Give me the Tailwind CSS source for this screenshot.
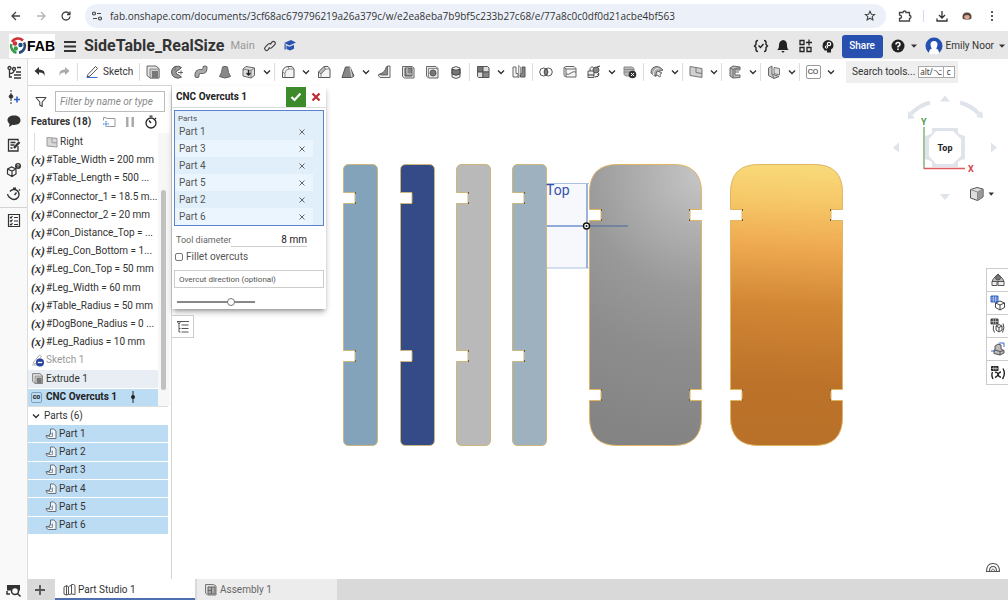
<!DOCTYPE html>
<html lang="en">

<head>
  <meta charset="UTF-8" />
  <meta name="viewport" content="width=device-width, initial-scale=1.0" />
  <title>SideTable_RealSize | Part Studio 1</title>
  <script src="https://cdn.jsdelivr.net/npm/@tailwindcss/browser@4"></script>
</head>

<body class="h-screen flex flex-col overflow-hidden bg-white font-[Roboto,sans-serif] text-[10px] leading-4 text-[#333]">

  <!-- shared icons -->
  <svg class="hidden">
    <symbol id="chev" viewBox="0 0 12 12"><path d="M3 4.5l3 3 3-3" fill="none" stroke="#333" stroke-width="1.4" /></symbol>
    <symbol id="caret" viewBox="0 0 8 8"><path d="M1 2.5h6L4 5.8z" fill="#333" /></symbol>
    <symbol id="close" viewBox="0 0 8 8"><path d="M1.5 1.5l5 5m0-5l-5 5" stroke="#666" stroke-width="1" fill="none" /></symbol>
    <symbol id="part" viewBox="0 0 12 12">
      <path d="M5.500 1h3.200L11 3v7.500H3.500Q1 10 1 7.500h3.500V6h1z" fill="#eef4f9" stroke="#67727c" stroke-width="1" stroke-linejoin="round" />
      <path d="M1 7.500l2.500 1h4V4.500M5.500 6h2" fill="none" stroke="#67727c" stroke-width=".7" />
    </symbol>
    <symbol id="extrude" viewBox="0 0 16 16">
      <path d="M2 2h9l3 2.500V14H5L2 11.500z" fill="#e4e4e4" stroke="#666" />
      <path d="M5 5h9v9H5z" fill="#ccc" stroke="#777" stroke-width=".8" />
      <path d="M7 7h6v7H7z" fill="#777" />
    </symbol>
  </svg>

  <!-- browser bar -->
  <div class="flex h-[31px] shrink-0 items-center pr-2 pl-2">
    <button class="flex w-[25px] items-center" aria-label="Back">
      <svg class="h-4 w-4" viewBox="0 0 16 16" fill="none" stroke="#444" stroke-width="1.300"><path d="M12 8H4m4-4L4 8l4 4" /></svg>
    </button>
    <button class="flex w-[25px] items-center" aria-label="Forward">
      <svg class="h-4 w-4" viewBox="0 0 16 16" fill="none" stroke="#b5b5b5" stroke-width="1.300"><path d="M4 8h8M8 4l4 4-4 4" /></svg>
    </button>
    <button class="flex w-[27px] items-center" aria-label="Reload">
      <svg class="h-4 w-4" viewBox="0 0 16 16" fill="none" stroke="#444" stroke-width="1.300"><path d="M11.500 6A4 4 0 1 0 12 8.500M12 3.500V6.500H9" /></svg>
    </button>
    <div class="flex h-6 flex-1 items-center rounded-full bg-[#ecf1f9] pr-2">
      <svg class="ml-1 h-4 w-4 shrink-0" viewBox="0 0 16 16" fill="none" stroke="#444" stroke-width="1.200"><circle cx="5" cy="5.500" r="1.500" /><path d="M8 5.500h4M4 10.500h4" /><circle cx="11" cy="10.500" r="1.500" /></svg>
      <input type="text" aria-label="Address" class="ml-[5px] min-w-0 flex-1 font-['Open_Sans',sans-serif] text-[10px] text-[#333] outline-none" value="fab.onshape.com/documents/3cf68ac679796219a26a379c/w/e2ea8eba7b9bf5c233b27c68/e/77a8c0c0df0d21acbe4bf563" />
      <button aria-label="Bookmark"><svg class="h-4 w-4" viewBox="0 0 16 16" fill="none" stroke="#444" stroke-width="1.100"><path d="M8 3.200l1.400 3 3.200.3-2.400 2.200.7 3.200L8 10.200l-2.900 1.700.7-3.200-2.400-2.200 3.200-.3z" /></svg></button>
    </div>
    <div class="flex w-[114px] items-center pl-[11px]">
      <svg class="h-4 w-4" viewBox="0 0 16 16" fill="none" stroke="#444" stroke-width="1.300"><path d="M2.500 4.500h3.500Q6 3 7.500 3T9 4.500h3.500V7.500Q14 7.500 14 9t-1.500 1.500V13h-10V10.500Q4.500 10.500 4.500 8.800T2.500 7z" /></svg>
      <span class="ml-2.5 h-3 w-px bg-[#cfdcf2]"></span>
      <svg class="ml-2.5 h-4 w-4" viewBox="0 0 16 16" fill="none" stroke="#333" stroke-width="1.300"><path d="M8 3v7M5 7l3 3 3-3M3 10.500V13h10v-2.500" /></svg>
      <svg class="ml-[9px] h-4 w-4" viewBox="0 0 16 16"><path d="M3.500 10Q3 4.500 8 4.500T12.500 10Q12 11.500 8 11.500T3.500 10" fill="#55443e" /><ellipse cx="8" cy="9" rx="2.800" ry="2" fill="#dda793" /></svg>
      <svg class="ml-[9px] h-4 w-4" viewBox="0 0 16 16" fill="#333"><circle cx="8" cy="4" r="1.100" /><circle cx="8" cy="8" r="1.100" /><circle cx="8" cy="12" r="1.100" /></svg>
    </div>
  </div>

  <!-- document header -->
  <header class="flex h-7 shrink-0 items-center bg-[#e7e7e7] pt-0.5 pr-0.5 pl-[9px]">
    <div class="flex h-6 w-[46px] items-center bg-white">
      <svg class="h-[18px] w-[18px] shrink-0" viewBox="0 0 18 18" fill="none" stroke-width="2.600">
        <path d="M3 5A7 7 0 0 1 14 3.500" stroke="#cf3038" />
        <path d="M15 5.500A7 7 0 0 1 10 15.700" stroke="#274d78" />
        <path d="M7.500 15.700A7 7 0 0 1 2.300 7" stroke="#3b9a4d" />
        <circle cx="6" cy="6.500" r="2.200" fill="#cf3038" stroke="none" /><circle cx="11.500" cy="8" r="2.200" fill="#274d78" stroke="none" /><circle cx="6.800" cy="11.500" r="2.200" fill="#3b9a4d" stroke="none" />
      </svg>
      <span class="font-['Liberation_Sans',sans-serif] text-sm font-bold text-black">FAB</span>
    </div>
    <button class="ml-2 flex" aria-label="Menu"><svg class="h-[14px] w-[14px]" viewBox="0 0 14 14" stroke="#333" stroke-width="2"><path d="M1 3h12M1 7.500h12M1 12h12" /></svg></button>
    <h1 class="ml-[7px] text-base font-bold text-[#333]">SideTable_RealSize</h1>
    <span class="ml-1.5 text-[11px] text-[#999]">Main</span>
    <a href="#" class="ml-[7px]" aria-label="Link"><svg class="h-4 w-4" viewBox="0 0 16 16" fill="none" stroke="#444" stroke-width="1.200"><path d="M7.500 10L6 11.800a1.900 1.900 0 0 1-2.800-2.700l3-3a1.900 1.900 0 0 1 2.900.3" /><path d="M8.500 5.800L10 4a1.900 1.900 0 0 1 2.800 2.700l-3 3a1.900 1.900 0 0 1-2.900-.3" /></svg></a>
    <a href="#" class="ml-1" aria-label="Education"><svg class="h-4 w-4" viewBox="0 0 16 16" fill="#2a52b0"><path d="M2 5L9 2l5 2.500L7.500 7.500zM4.500 7.500l3 1.200 4.500-2v4L8 12.500l-3.500-1.500zM2.500 6v5.500h1.300V6.500z" /></svg></a>
    <div class="ml-auto flex items-center">
      <svg class="h-4 w-[22px]" viewBox="0 0 22 16" fill="none" stroke="#222" stroke-width="1.400"><path d="M8 2.500Q6 2.500 6 4.500V6.500L4.500 8 6 9.500v2q0 2 2 2M14 2.500q2 0 2 2V6.500L17.500 8 16 9.500v2q0 2-2 2M8.500 7.500l2 2 3-3.500" /></svg>
      <svg class="h-4 w-[22px]" viewBox="0 0 22 16" fill="#222"><path d="M11 2Q15 2.500 15 7T17 12H5Q7 11 7 7T11 2M9.500 13h3q-.3 1.500-1.500 1.500T9.500 13" /></svg>
      <svg class="h-4 w-[23px]" viewBox="0 0 22 16" fill="none" stroke="#222" stroke-width="1.300"><path d="M5.500 2.500h4v4h-4zM5.500 9.500h4v4h-4zM12.500 9.500h4v4h-4zM14.500 1.500v6M11.500 4.500h6" /></svg>
      <svg class="h-4 w-[22px]" viewBox="0 0 22 16"><path d="M11 2a5.500 5.500 0 0 1 5.500 5.500q0 3-2.500 4v3h-4v-2H7.500l-2-3.500q-.5-6 5.500-7" fill="#222" /><circle cx="12" cy="6" r="1.700" fill="none" stroke="#fff" stroke-width="1.200" /><circle cx="9.500" cy="9" r="1.200" fill="none" stroke="#fff" /></svg>
      <button class="ml-[3px] h-[23px] w-[41px] rounded-[3px] bg-[#2850ae] text-[10px] font-medium text-white">Share</button>
      <button class="ml-[7px] flex items-center" aria-label="Help"><svg class="h-4 w-4" viewBox="0 0 16 16"><circle cx="8" cy="8" r="6.500" fill="#222" /><path d="M6 6.500Q6 4.500 8 4.500t2 2Q10 7.500 8 8.500V9.500M8 10.500v1.500" fill="none" stroke="#fff" stroke-width="1.500" /></svg><svg class="ml-1 h-2 w-2"><use href="#caret" /></svg></button>
      <button class="ml-[7px] flex items-center">
        <svg class="h-[18px] w-[18px]" viewBox="0 0 18 18"><circle cx="9" cy="9" r="8.500" fill="#2450b4" /><path d="M4 16.500q0-4.500 3-5Q5.500 9.500 5.500 7.500 5.500 4 9 4t3.500 3.500q0 2-1.500 4 3 .5 3 5Q9 19 4 16.500" fill="#fff" /></svg>
        <span class="ml-[3px]">Emily Noor</span><svg class="ml-1 h-2 w-2"><use href="#caret" /></svg>
      </button>
    </div>
  </header>

  <div class="flex min-h-0 flex-1">
    <!-- left rail -->
    <nav class="flex w-7 shrink-0 flex-col items-center border-r border-[#ddd] bg-[#f9f9f9] pt-[5px] pb-0.5">
      <svg class="h-4 w-4" viewBox="0 0 16 16" fill="none" stroke="#333" stroke-width="1.300"><circle cx="3.500" cy="4" r="1.500" /><circle cx="8" cy="5" r="1.500" /><path d="M3.500 5.500V13H6M3.500 9.500Q8 9.500 8 6.500M11 3.500h4M10 8h5M8 11h7M8 14h7" /></svg>
      <svg class="mt-[9px] h-4 w-4" viewBox="0 0 16 16" fill="none" stroke="#333"><path d="M5 1v14" stroke-dasharray="2 1" /><circle cx="5" cy="7.500" r="1.800" fill="#333" /><path d="M8 10.500h6M11 7.500v6" stroke="#2f5fc0" stroke-width="1.600" /></svg>
      <svg class="mt-2 h-4 w-4" viewBox="0 0 16 16" fill="#333"><path d="M8 2.500c4 0 6.500 2 6.500 4.800S12 12 8 12q-1 0-1.500-.2L3 14l.6-3Q1.500 9.800 1.500 7.300C1.500 4.500 4 2.500 8 2.500" /></svg>
      <svg class="mt-2 h-4 w-4" viewBox="0 0 16 16" fill="none" stroke="#333" stroke-width="1.300"><path d="M12 9v5H2.500V2.500H12V4M4.500 5.500h5M4.500 8h4M4.500 11h2" /><path d="M8 11l5.500-6" stroke-width="2.400" /></svg>
      <svg class="mt-[9px] h-4 w-4" viewBox="0 0 16 16" fill="none" stroke="#333" stroke-width="1.200"><path d="M1.500 7l4-2 4.500 2v5L6 14.500 1.500 12zM1.500 7L6 9l4-2M6 9v5.500" /><circle cx="12" cy="4" r="3" fill="#333" stroke="none" /><path d="M11 3.500q0-1 1-1t1 1L12 4.500v1" stroke="#fff" stroke-width=".8" /></svg>
      <svg class="mt-2 h-4 w-4" viewBox="0 0 16 16" fill="none" stroke="#333" stroke-width="1.400"><path d="M4 5.500A5 5 0 1 1 4.500 12M1.500 8Q2 11 4.500 12M8.500 9l2-2.500M7 2.200h3M8.500 2v2M13 3.500l1 1" /></svg>
      <span class="mt-[5px] h-px w-full shrink-0 bg-[#d4d4d4]"></span>
      <svg class="mt-1 h-4 w-4" viewBox="0 0 16 16" fill="none" stroke="#333" stroke-width="1.200"><path d="M2.500 2.500h11v12h-11zM4 5l1 1 1.500-2M4 8.500l1 1L6.500 7.500M4 12l1 1 1.500-2M8 5.500h4M8 9h4M8 12.500h4" /></svg>
      <svg class="mt-auto h-4 w-4" viewBox="0 0 16 16"><path d="M1 3h13v5.500H1z" fill="#333" /><circle cx="9" cy="9" r="3.500" fill="#f9f9f9" stroke="#333" stroke-width="1.500" /><path d="M11.500 11.500l3 3M1 9v3h3" stroke="#333" stroke-width="1.500" fill="none" /></svg>
    </nav>

    <div class="flex min-w-0 flex-1 flex-col">
      <!-- toolbar -->
      <div class="flex h-[26px] shrink-0 items-center">
        <button class="flex w-6 justify-center" aria-label="Undo"><svg class="h-4 w-4" viewBox="0 0 16 16"><path d="M7 3L2.500 7 7 11V8.500q5-.5 5.500 4Q14 5.500 7 5.500z" fill="#333" /></svg></button>
        <button class="flex w-6 justify-center" aria-label="Redo"><svg class="h-4 w-4" viewBox="0 0 16 16"><path d="M9 3l4.500 4L9 11V8.500q-5-.5-5.500 4Q2 5.500 9 5.500z" fill="#aaa" /></svg></button>
        <span class="mx-px h-[18px] w-px bg-[#ddd]"></span>
        <button class="flex w-[59px] items-center pl-1.5"><svg class="mr-0.5 h-4 w-4" viewBox="0 0 16 16" fill="none"><path d="M3 10.500L10.500 2.500l2 2L5 12l-3 1z" stroke="#555" /><path d="M1.500 13.500h11" stroke="#3a6fd0" /></svg>Sketch</button>
        <span class="mx-px h-[18px] w-px bg-[#ddd]"></span>
        <button class="flex w-6 justify-center" aria-label="Extrude"><svg class="h-4 w-4"><use href="#extrude" /></svg></button>
        <button class="flex w-6 justify-center" aria-label="Revolve"><svg class="h-4 w-4" viewBox="0 0 16 16"><path d="M12.500 3.500L9 6.500a2 2 0 1 0 0 4l3.500 2.500Q9 15 6 13.500 2.500 12 2.500 8T6 2.500q4-1 6.500 1" fill="#999" stroke="#555" /><path d="M9 8.500h5M12 6.500v4M6 2.500v4" stroke="#666" /></svg></button>
        <button class="flex w-6 justify-center" aria-label="Sweep"><svg class="h-4 w-4" viewBox="0 0 16 16"><path d="M4 11.500q0-4.500 4-4t4-3.500" fill="none" stroke="#555" stroke-width="5" stroke-linecap="round" /><path d="M4 11.500q0-4.500 4-4t4-3.500" fill="none" stroke="#aaa" stroke-width="3.400" stroke-linecap="round" /></svg></button>
        <button class="flex w-6 justify-center" aria-label="Loft"><svg class="h-4 w-4" viewBox="0 0 16 16"><path d="M5.500 3Q8 1.500 10.500 3q.5 6 3 9.500Q8 15.500 2.500 12.500 5 9 5.500 3" fill="#888" stroke="#666" /></svg></button>
        <button class="flex w-6 justify-center" aria-label="Thicken"><svg class="h-4 w-4" viewBox="0 0 16 16"><path d="M2 5l3-2.500L13.500 4v7.500L10 14 2 12z" fill="#ddd" stroke="#666" /><path d="M2 5l8 1.500L13.500 4M10 6.500V14" fill="none" stroke="#666" stroke-width=".8" /><path d="M7.500 6v5M5.500 9l2 2 2-2" stroke="#222" stroke-width="1.300" fill="none" /></svg></button>
        <button class="flex w-3 justify-center" aria-label="More"><svg class="h-3 w-3"><use href="#chev" /></svg></button>
        <span class="mx-px h-[18px] w-px bg-[#ddd]"></span>
        <button class="flex w-6 justify-center" aria-label="Fillet"><svg class="h-4 w-4" viewBox="0 0 16 16" fill="none" stroke="#555"><path d="M2.500 13.500V8Q3 3 8 2.500H12L14 5v8.500z" fill="#f4f4f4" /><path d="M5 13.500V9.500Q5 5.500 9 5h5M8 2.500L9 5M2.500 8L5 9.500" stroke="#888" /></svg></button>
        <button class="flex w-3 justify-center" aria-label="More"><svg class="h-3 w-3"><use href="#chev" /></svg></button>
        <button class="flex w-6 justify-center" aria-label="Chamfer"><svg class="h-4 w-4" viewBox="0 0 16 16" fill="none" stroke="#555"><path d="M2.500 13.500V8l5.500-5.500h4L14 5v8.500z" fill="#f4f4f4" /><path d="M5 13.500V10L9.500 5H14" stroke="#888" /><path d="M2.500 8L8 2.500 9.500 5 5 10z" fill="#bbb" stroke="#777" /></svg></button>
        <button class="flex w-6 justify-center" aria-label="Draft"><svg class="h-4 w-4" viewBox="0 0 16 16"><path d="M5.500 3H10l4 9-2 1.500H2z" fill="#888" stroke="#555" /><path d="M10 3l2 10.500" stroke="#ddd" /></svg></button>
        <button class="flex w-3 justify-center" aria-label="More"><svg class="h-3 w-3"><use href="#chev" /></svg></button>
        <button class="flex w-6 justify-center" aria-label="Rib"><svg class="h-4 w-4" viewBox="0 0 16 16"><path d="M11.500 2h2.500v11.500H4L2 11l6-1.500z" fill="#eee" stroke="#666" /><path d="M3.500 10Q9 8.500 10 3.500l1.500-1.500V11H5z" fill="#888" stroke="#555" stroke-width=".8" /></svg></button>
        <button class="flex w-6 justify-center" aria-label="Shell"><svg class="h-4 w-4" viewBox="0 0 16 16"><path d="M2.500 2.500H12L14 4v10H4.500l-2-1.500z" fill="#e8e8e8" stroke="#666" /><path d="M5 4h7v8H5z" fill="#888" stroke="#555" /><path d="M7 4v6h5" stroke="#ccc" fill="none" /></svg></button>
        <button class="flex w-6 justify-center" aria-label="Hole"><svg class="h-4 w-4" viewBox="0 0 16 16"><path d="M2.500 2.500H12L14 4.500V14H4.500l-2-2z" fill="#e8e8e8" stroke="#666" /><path d="M4.500 4.500H14M4.500 4.500V14" stroke="#888" /><circle cx="9" cy="9" r="3" fill="#777" stroke="#555" /></svg></button>
        <button class="flex w-6 justify-center" aria-label="Thread"><svg class="h-4 w-4" viewBox="0 0 16 16"><path d="M4 4Q8 1 12 4v9q-4 3-8 0z" fill="#eee" stroke="#555" /><path d="M4 5q4 2.500 8 0v5q-4 2.500-8 0z" fill="#777" stroke="#444" /></svg></button>
        <span class="mx-px h-[18px] w-px bg-[#ddd]"></span>
        <button class="flex w-6 justify-center" aria-label="Pattern"><svg class="h-4 w-4" viewBox="0 0 16 16" stroke="#555"><path d="M2.500 2.500h5.500V8H2.500z" fill="#777" /><path d="M8 2.500h4.500L14 4v4H8zM2.500 8H8v5.500H3.500l-1-1z" fill="#ddd" /><path d="M8 8h6v5.500H8z" fill="#888" /></svg></button>
        <button class="flex w-3 justify-center" aria-label="More"><svg class="h-3 w-3"><use href="#chev" /></svg></button>
        <button class="flex w-6 justify-center" aria-label="Mirror"><svg class="h-4 w-4" viewBox="0 0 16 16"><path d="M2 3h3v6.500h2V13H2z" fill="#f2f2f2" stroke="#666" /><path d="M14 3h-3v6.500H9.500V13H14z" fill="#888" stroke="#555" /><path d="M7.500 1.500l2 1.500v7l-2 4z" fill="#ddd" stroke="#777" stroke-width=".7" /></svg></button>
        <span class="mx-px h-[18px] w-px bg-[#ddd]"></span>
        <button class="flex w-6 justify-center" aria-label="Boolean"><svg class="h-4 w-4" viewBox="0 0 16 16" fill="none" stroke="#555"><path d="M8 4.600a4 4 0 0 1 0 6.800 4 4 0 0 1 0-6.800" fill="#888" /><circle cx="5.700" cy="8" r="4" /><circle cx="10.300" cy="8" r="4" /></svg></button>
        <button class="flex w-6 justify-center" aria-label="Split"><svg class="h-4 w-4" viewBox="0 0 16 16" fill="none" stroke="#666"><path d="M2 3.500L4 2.500H12L14 4.500V13H4l-2-1.500z" fill="#f7f7f7" /><path d="M2 3.500L4 5h10M4 5v8M4 10q3 1 5-1t5-1" /></svg></button>
        <button class="flex w-6 justify-center" aria-label="Transform"><svg class="h-4 w-4" viewBox="0 0 16 16" fill="none" stroke="#555"><path d="M2 7h6v6.500H2zM4 7V4.500L6 2.500l2 2V7" fill="#eee" /><circle cx="10" cy="6" r="3" fill="#888" /><path d="M11 3l3-1M9 13q4 0 4-3M13 9l-1.500 2M2 11h6" stroke="#333" /></svg></button>
        <button class="flex w-3 justify-center" aria-label="More"><svg class="h-3 w-3"><use href="#chev" /></svg></button>
        <button class="flex w-6 justify-center" aria-label="Delete part"><svg class="h-4 w-4" viewBox="0 0 16 16"><path d="M2 3h8l2 1.500V12H4l-2-1.500zM2 5.500h10M2 8h10" fill="#bbb" stroke="#888" /><circle cx="10.500" cy="10.500" r="3.800" fill="#333" /><path d="M9 9l3 3m0-3l-3 3" stroke="#fff" /></svg></button>
        <span class="mx-px h-[18px] w-px bg-[#ddd]"></span>
        <button class="flex w-6 justify-center" aria-label="Surface"><svg class="h-4 w-4" viewBox="0 0 16 16"><path d="M2 9q0-6.500 6-6.500 3 0 6 3.500l-4 1.500q-3-1-3.500 5z" fill="#aaa" stroke="#666" /><path d="M4.500 11Q4 5 9.500 4.500" stroke="#eee" fill="none" /><path d="M8 7l5 2-2 1 .5 2.500-1.500.5-1-2-1.500 1z" fill="#fff" stroke="#555" stroke-width=".8" /></svg></button>
        <button class="flex w-3 justify-center" aria-label="More"><svg class="h-3 w-3"><use href="#chev" /></svg></button>
        <span class="mx-px h-[18px] w-px bg-[#ddd]"></span>
        <button class="flex w-6 justify-center" aria-label="Plane"><svg class="h-4 w-4" viewBox="0 0 16 16"><path d="M2 2.500l12 2V13.500L2 11.500z" fill="#d0d0d0" stroke="#777" /><path d="M8 3.500V8.500l6 1" stroke="#777" fill="none" /></svg></button>
        <button class="flex w-3 justify-center" aria-label="More"><svg class="h-3 w-3"><use href="#chev" /></svg></button>
        <span class="mx-px h-[18px] w-px bg-[#ddd]"></span>
        <button class="flex w-6 justify-center" aria-label="Frame"><svg class="h-4 w-4" viewBox="0 0 16 16"><path d="M3 4l3-2 7 1v3H8v5h5v2.500l-7 .5-3-2z" fill="#bbb" stroke="#666" /><path d="M3 4l3 1.500V14M6 5.500L13 3.500M8 8h4" stroke="#666" fill="none" /></svg></button>
        <button class="flex w-3 justify-center" aria-label="More"><svg class="h-3 w-3"><use href="#chev" /></svg></button>
        <span class="mx-px h-[18px] w-px bg-[#ddd]"></span>
        <button class="flex w-6 justify-center" aria-label="Sheet metal"><svg class="h-4 w-4" viewBox="0 0 16 16"><path d="M2.500 4L6 2v8l7 2.500L8 14.500l-5.500-3z" fill="#ccc" stroke="#666" /><path d="M8 3.500l5.500 1V11L8 9.500zM6 10l2 4" fill="#ddd" stroke="#777" /></svg></button>
        <button class="flex w-3 justify-center" aria-label="More"><svg class="h-3 w-3"><use href="#chev" /></svg></button>
        <span class="mx-px h-[18px] w-px bg-[#ddd]"></span>
        <button class="flex w-6 justify-center"><span class="h-[14px] w-[15px] rounded-xs border border-[#999] text-center text-[8px] leading-3">CO</span></button>
        <button class="flex w-3 justify-center" aria-label="More"><svg class="h-3 w-3"><use href="#chev" /></svg></button>
        <button class="ml-[9px] flex h-[22px] w-[112px] items-center bg-[#efefef] pl-1.5 whitespace-nowrap">Search tools...
          <kbd class="ml-[3px] border border-[#aaa] bg-white px-px font-sans text-[8px] leading-[10px]">alt/⌥</kbd><kbd class="border border-l-0 border-[#aaa] bg-white px-[3px] font-sans text-[8px] leading-[10px]">c</kbd>
        </button>
      </div>

      <div class="flex min-h-0 flex-1">
        <!-- feature list -->
        <aside class="flex w-36 shrink-0 flex-col border-t border-r border-[#d4d4d4]">
          <div class="flex h-[27px] items-center pt-1 pr-1.5 pl-[7px]">
            <svg class="h-3 w-3 shrink-0" viewBox="0 0 12 12" fill="none" stroke="#444" stroke-width="1.100"><path d="M1 1.500h10L7.200 6v4.500L4.800 9V6z" stroke-linejoin="round" /></svg>
            <input type="text" aria-label="Filter" placeholder="Filter by name or type" class="ml-2 h-[21px] w-full min-w-0 border border-[#bbb] px-1 italic outline-none placeholder:text-[#888]" />
          </div>
          <div class="flex h-[18px] items-center pl-[3px] font-bold">
            Features (18)
            <svg class="ml-auto h-3 w-[14px]" viewBox="0 0 14 12" fill="none" stroke="#999"><path d="M4 2.500V1.500H1.500M4.500 2.500h8.500v8H5M1.500 1.500v3" /><path d="M1 8h6M4 5v6" stroke="#2f6fd0" stroke-dasharray="1.500 .7" /></svg>
            <svg class="ml-2 h-3 w-3" viewBox="0 0 12 12"><path d="M2 1h2.500v10H2zM7.500 1H10v10H7.500z" fill="#aaa" /></svg>
            <svg class="mr-[13px] ml-2 h-[14px] w-[14px]" viewBox="0 0 14 14" fill="none" stroke="#222" stroke-width="1.300"><circle cx="7" cy="8" r="5" /><path d="M7 8L5 5.500M5.500 1.200h3M11 3l1 1" /></svg>
          </div>
          <div class="flex pt-0.5">
            <ul class="grid h-[273px] w-[130px] auto-rows-fr whitespace-nowrap">
              <li class="flex items-center"><span class="ml-1.5 h-full w-3 border-l border-[#ddd]"></span><svg class="mr-0.5 h-3 w-3" viewBox="0 0 12 12"><path d="M1 1.500l10 .8V11L1 10z" fill="#d8d8d8" stroke="#999" /><path d="M6 2v4.500l5 .5" stroke="#999" fill="none" /></svg>Right</li>
              <li class="flex items-center"><i class="w-[18px] pl-[3px] font-['Liberation_Serif',serif] text-xs font-bold">(x)</i>#Table_Width = 200 mm</li>
              <li class="flex items-center"><i class="w-[18px] pl-[3px] font-['Liberation_Serif',serif] text-xs font-bold">(x)</i>#Table_Length = 500 ...</li>
              <li class="flex items-center"><i class="w-[18px] pl-[3px] font-['Liberation_Serif',serif] text-xs font-bold">(x)</i>#Connector_1 = 18.5 m...</li>
              <li class="flex items-center"><i class="w-[18px] pl-[3px] font-['Liberation_Serif',serif] text-xs font-bold">(x)</i>#Connector_2 = 20 mm</li>
              <li class="flex items-center"><i class="w-[18px] pl-[3px] font-['Liberation_Serif',serif] text-xs font-bold">(x)</i>#Con_Distance_Top = ...</li>
              <li class="flex items-center"><i class="w-[18px] pl-[3px] font-['Liberation_Serif',serif] text-xs font-bold">(x)</i>#Leg_Con_Bottom = 1...</li>
              <li class="flex items-center"><i class="w-[18px] pl-[3px] font-['Liberation_Serif',serif] text-xs font-bold">(x)</i>#Leg_Con_Top = 50 mm</li>
              <li class="flex items-center"><i class="w-[18px] pl-[3px] font-['Liberation_Serif',serif] text-xs font-bold">(x)</i>#Leg_Width = 60 mm</li>
              <li class="flex items-center"><i class="w-[18px] pl-[3px] font-['Liberation_Serif',serif] text-xs font-bold">(x)</i>#Table_Radius = 50 mm</li>
              <li class="flex items-center"><i class="w-[18px] pl-[3px] font-['Liberation_Serif',serif] text-xs font-bold">(x)</i>#DogBone_Radius = 0 ...</li>
              <li class="flex items-center"><i class="w-[18px] pl-[3px] font-['Liberation_Serif',serif] text-xs font-bold">(x)</i>#Leg_Radius = 10 mm</li>
              <li class="flex items-center text-[#999]"><svg class="mr-0.5 ml-1 h-[14px] w-3" viewBox="0 0 12 14" fill="none"><path d="M1 10L7.500 2l2 1.500L3 11z M0 12h5" stroke="#aaa" /><circle cx="8" cy="9.500" r="4" fill="#24419f" /><path d="M5.800 9.500h4.400" stroke="#fff" stroke-width="1.400" /></svg>Sketch 1</li>
              <li class="flex items-center bg-[#e9eef4]"><svg class="mr-0.5 ml-[3px] h-[13px] w-[13px]"><use href="#extrude" /></svg>Extrude 1</li>
              <li class="mt-px flex items-center bg-[#bcdcf4] font-bold text-[#222]"><span class="mr-1 ml-[3px] w-[11px] rounded-xs border border-[#7fa0ba] text-center text-[7px] leading-[9px]">co</span>CNC Overcuts 1<svg class="ml-2.5 h-3 w-3" viewBox="0 0 12 12"><path d="M6 0v12" stroke="#222" /><circle cx="6" cy="6" r="2" fill="#222" /></svg></li>
            </ul>
            <div class="h-[273px] w-3 bg-[#f7f7f7] pt-[57px] pl-[3px]"><div class="h-[200px] w-[5px] rounded-full bg-[#c1c1c1]"></div></div>
          </div>
          <div class="flex h-[19px] w-[140px] items-center border-t border-[#ddd] pl-0.5"><svg class="mr-0.5 h-3 w-3"><use href="#chev" /></svg>Parts (6)</div>
          <ul class="grid h-[109px] w-[140px] auto-rows-fr gap-px">
            <li class="flex items-center bg-[#bcdcf4] pl-[17px]"><svg class="mr-0.5 h-3 w-3"><use href="#part" /></svg>Part 1</li>
            <li class="flex items-center bg-[#bcdcf4] pl-[17px]"><svg class="mr-0.5 h-3 w-3"><use href="#part" /></svg>Part 2</li>
            <li class="flex items-center bg-[#bcdcf4] pl-[17px]"><svg class="mr-0.5 h-3 w-3"><use href="#part" /></svg>Part 3</li>
            <li class="flex items-center bg-[#bcdcf4] pl-[17px]"><svg class="mr-0.5 h-3 w-3"><use href="#part" /></svg>Part 4</li>
            <li class="flex items-center bg-[#bcdcf4] pl-[17px]"><svg class="mr-0.5 h-3 w-3"><use href="#part" /></svg>Part 5</li>
            <li class="flex items-center bg-[#bcdcf4] pl-[17px]"><svg class="mr-0.5 h-3 w-3"><use href="#part" /></svg>Part 6</li>
          </ul>
        </aside>

        <!-- 3D view -->
        <main class="relative min-w-0 flex-1">
          <svg class="absolute inset-0 h-full w-full" viewBox="172 85 836 494" preserveAspectRatio="xMinYMin">
            <defs>
              <radialGradient id="steel" gradientUnits="userSpaceOnUse" cx="113" cy="10" r="280">
                <stop offset="0" stop-color="#c6c6c6" /><stop offset=".2" stop-color="#b0b0b0" /><stop offset=".42" stop-color="#999" /><stop offset=".65" stop-color="#8d8d8d" /><stop offset="1" stop-color="#838383" />
              </radialGradient>
              <linearGradient id="brass" gradientUnits="userSpaceOnUse" x1="63" y1="0" x2="51" y2="281">
                <stop offset="0" stop-color="#f8da7a" /><stop offset=".13" stop-color="#f6c868" /><stop offset=".28" stop-color="#f0ac52" /><stop offset=".5" stop-color="#d28735" /><stop offset=".78" stop-color="#bc7229" /><stop offset="1" stop-color="#b97028" />
              </linearGradient>
              <path id="leg" d="M6 .5h23q5.500 0 5.500 5.500v270q0 5.500-5.500 5.500H6Q.5 281.500.5 276V197.500H12v-11H.5V39.500H12v-11H.5V6Q.5.500 6 .5z" stroke="#cdb67c" />
              <path id="legMarks" d="M12.500 28v2M12.500 38v2M12.500 186v2M12.500 196v2" stroke="#6d5c45" />
              <path id="board" d="M28.500.5h56Q112.500.5 112.500 28.500V45.500H101v11h11.500v169H101v11h11.500V253.500q0 28-28 28h-56Q.5 281.500.5 253.500V236.500H12v-11H.5V56.500H12v-11H.5V28.500Q.5.500 28.500.5z" stroke="#dfb462" />
              <path id="boardMarks" d="M12.500 45v2M12.500 55v2M12.500 225v2M12.500 235v2M100.500 45v2M100.500 55v2M100.500 225v2M100.500 235v2" stroke="#6d5c45" />
            </defs>
            <rect x="546" y="183.500" width="42" height="84" fill="#f6f8fb" />
            <path d="M546 183.500h43M546 268h43" stroke="#a9bfe4" />
            <path d="M587 184v84" stroke="#7d9bd6" stroke-width="1.500" />
            <g transform="translate(343 164)" fill="#83a3ba"><use href="#leg" /><use href="#legMarks" /></g>
            <g transform="translate(400 164)" fill="#344b87"><use href="#leg" /><use href="#legMarks" /></g>
            <g transform="translate(456 164)" fill="#b9b9b9"><use href="#leg" /><use href="#legMarks" /></g>
            <g transform="translate(512 164)" fill="#9eb1bf"><use href="#leg" /><use href="#legMarks" /></g>
            <g transform="translate(589 164)" fill="url(#steel)"><use href="#board" /><use href="#boardMarks" /></g>
            <g transform="translate(730 164)" fill="url(#brass)"><use href="#board" /><use href="#boardMarks" /></g>
            <path d="M547 226h39" stroke="#6f90cf" stroke-width="1.300" />
            <path d="M586 226h42" stroke="#657b9b" stroke-width="1.300" />
            <circle cx="586.500" cy="226" r="3" fill="#fff" stroke="#111" stroke-width="1.400" /><circle cx="586.500" cy="226" r="1" fill="#111" />
            <text x="546" y="195" class="fill-[#3551ad] text-[14px]">Top</text>
          </svg>

          <!-- feature dialog -->
          <form class="relative mt-px w-[154px] bg-white shadow-md shadow-black/30">
            <div class="flex h-[22px] items-center border-b border-[#ddd] pl-1 font-bold text-[#222]">
              CNC Overcuts 1
              <button type="button" class="ml-auto flex h-5 w-5 items-center justify-center bg-[#3c8a2a]" aria-label="Accept"><svg class="h-3 w-3" viewBox="0 0 12 12"><path d="M1.500 6l3 3 6-6.500" fill="none" stroke="#fff" stroke-width="2.200" /></svg></button>
              <button type="button" class="flex h-5 w-5 items-center justify-center" aria-label="Cancel"><svg class="h-2.5 w-2.5" viewBox="0 0 10 10"><path d="M1.500 1.500l7 7m0-7l-7 7" stroke="#bd2c30" stroke-width="2.200" /></svg></button>
            </div>
            <div class="mx-0.5 mt-0.5 border border-[#5d80cf] bg-[#e0effa] pt-[3px] text-[#555]">
              <div class="pl-[3px] text-[8px] leading-[9px]">Parts</div>
              <ul>
                <li class="mr-2.5 flex h-[17px] items-center justify-between pr-[7px] pl-1">Part 1<button type="button" aria-label="Remove Part 1"><svg class="h-2 w-2"><use href="#close" /></svg></button></li>
                <li class="mr-2.5 flex h-[17px] items-center justify-between bg-[#ebf5fd] pr-[7px] pl-1">Part 3<button type="button" aria-label="Remove Part 3"><svg class="h-2 w-2"><use href="#close" /></svg></button></li>
                <li class="mr-2.5 flex h-[17px] items-center justify-between pr-[7px] pl-1">Part 4<button type="button" aria-label="Remove Part 4"><svg class="h-2 w-2"><use href="#close" /></svg></button></li>
                <li class="mr-2.5 flex h-[17px] items-center justify-between bg-[#ebf5fd] pr-[7px] pl-1">Part 5<button type="button" aria-label="Remove Part 5"><svg class="h-2 w-2"><use href="#close" /></svg></button></li>
                <li class="mr-2.5 flex h-[17px] items-center justify-between pr-[7px] pl-1">Part 2<button type="button" aria-label="Remove Part 2"><svg class="h-2 w-2"><use href="#close" /></svg></button></li>
                <li class="mr-2.5 flex h-[17px] items-center justify-between bg-[#ebf5fd] pr-[7px] pl-1">Part 6<button type="button" aria-label="Remove Part 6"><svg class="h-2 w-2"><use href="#close" /></svg></button></li>
              </ul>
            </div>
            <div class="mt-[7px] flex h-[14px] items-center pl-1 text-[#666]">
              <label for="tool" class="w-[55px] shrink-0 text-[9px] whitespace-nowrap">Tool diameter</label>
              <input id="tool" type="text" value="8 mm" class="h-[14px] w-[76px] border-b border-[#ccc] text-right text-[#222] outline-none" />
            </div>
            <div class="mt-[3px] flex h-[14px] items-center pl-[3px] text-[#555]">
              <input id="fillet" type="checkbox" class="h-2 w-2 appearance-none rounded-xs border border-[#777] bg-white" />
              <label for="fillet" class="ml-[3px]">Fillet overcuts</label>
            </div>
            <input type="text" aria-label="Overcut direction" placeholder="Overcut direction (optional)" class="mx-0.5 mt-[6px] block h-[18px] w-[150px] border border-[#ccc] px-1 text-[8px] outline-none placeholder:text-[#555]" />
            <div class="flex h-[21px] items-center pt-1.5 pl-[5px]">
              <input type="range" aria-label="Opacity" min="0" max="100" value="72" class="h-0.5 w-[78px] appearance-none bg-[#888] [&::-webkit-slider-thumb]:h-2 [&::-webkit-slider-thumb]:w-2 [&::-webkit-slider-thumb]:appearance-none [&::-webkit-slider-thumb]:rounded-full [&::-webkit-slider-thumb]:border [&::-webkit-slider-thumb]:border-[#777] [&::-webkit-slider-thumb]:bg-white" />
            </div>
          </form>
          <button class="relative mt-1.5 flex h-[23px] w-[22px] items-center justify-center border border-l-0 border-[#ccc] bg-white" aria-label="Feature list">
            <svg class="h-[14px] w-[14px]" viewBox="0 0 14 14" fill="none" stroke="#555"><path d="M1 1.500h12M1.500 2l1.500 2 1.500-2M3 3v9M3 8.500h1.500M3 12h1.500M5.500 5h7M5.500 8.500h7M5.500 12h7" /></svg>
          </button>

          <!-- view cube -->
          <svg class="absolute top-0 right-0 h-[130px] w-[118px]" viewBox="890 85 118 130">
            <g fill="#dfe4ea"><path d="M945 95.500l5 6h-10zM945 200l5-6h-10zM893 147.500l6-5v10zM997 147.500l-6-5v10zM908 119v-8l7 7zM983 118l-7-1 6-6z" /></g>
            <g fill="none" stroke="#dfe4ea" stroke-width="4"><path d="M911 114q7-8 19-11.500M960 102.500q12 3.500 19 11.500" /></g>
            <path d="M932 128h26v5q2 2 7 3v23q-5 1-7 3v5h-26v-5q-2-2-7-3V136q5-1 7-3z" fill="#dfe4ea" />
            <path d="M936 131h17l8 8v17l-8 8h-17l-7-8v-17z" fill="#fff" />
            <path d="M924 127v42" stroke="#6fa868" stroke-width="1.300" /><path d="M924 168.500h41" stroke="#dc5a5f" stroke-width="1.300" />
            <text x="921" y="124.500" class="fill-[#4f9a4a] text-[9px] font-bold">Y</text>
            <text x="968" y="172" class="fill-[#d6424a] text-[9px] font-bold">X</text>
            <text x="945" y="151" text-anchor="middle" class="fill-[#222] text-[9px] font-bold">Top</text>
            <path d="M970.500 189.500l6.500-2 6 1.500v8l-5.500 3.500-7-2.500z" fill="#ddd" stroke="#555" /><path d="M977.500 192l5.500-3v8l-5.500 3.500z" fill="#999" stroke="#777" stroke-width=".7" /><path d="M970.500 189.500l7 2.500" stroke="#888" />
            <path d="M988.500 192.500h5.500l-2.800 3.200z" fill="#333" />
          </svg>

          <!-- right panel tabs -->
          <div class="absolute top-[183px] right-0 flex w-[22px] flex-col divide-y divide-[#ccc] border border-r-0 border-[#ccc] bg-white">
            <button class="flex h-[23px] items-center justify-center" aria-label="Appearances"><svg class="h-4 w-4" viewBox="0 0 16 16" stroke="#555"><path d="M3.500 6.500L8 2l4.500 4.500 1.500 3H2z" fill="#bbb" /><circle cx="8" cy="5.500" r="2.500" fill="#777" /><path d="M2 9.500h5v4H2zM8 9.500h6v4H8z" fill="#eee" /></svg></button>
            <button class="flex h-[23px] items-center justify-center" aria-label="Configurations"><svg class="h-4 w-4" viewBox="0 0 16 16" fill="none" stroke="#444"><path d="M5.500 8l4.500-2 4.500 2v4.500L10 15l-4.500-2.500zM5.500 8l4.500 2 4.500-2M10 10v5" fill="#fff" /><path d="M1 1h7v6H1z" fill="#2f60c4" stroke="#2f60c4" /><path d="M1 3h7M1 5h7M3.300 1v6M5.700 1v6" stroke="#fff" stroke-width=".5" /></svg></button>
            <button class="flex h-[23px] items-center justify-center" aria-label="Configuration variables"><svg class="h-4 w-4" viewBox="0 0 16 16" fill="none" stroke="#444"><path d="M6 8l3-1.500 3 1.500v4l-3 2-3-2zM6 8l3 1.500L12 8M9 9.500v4M13 5.500q2 4-.5 9M3.500 7.500q-1 4 1 7" /><path d="M1 1h7v5H1z" fill="#444" /><path d="M1 3.500h7M3.300 1v5M5.700 1v5" stroke="#fff" stroke-width=".5" /></svg></button>
            <button class="flex h-[23px] items-center justify-center" aria-label="Part positions"><svg class="h-4 w-4" viewBox="0 0 16 16" stroke="#555"><path d="M5 5l3-2 3 1v4l3 1.500V12l-4 2-6-1.500V9h1z" fill="#bbb" /><path d="M5 9l5 1.500 4-1M10 10.500V14" fill="none" /><path d="M9 2h5v4M1 10h4" stroke="#3d6bc8" fill="none" /></svg></button>
            <button class="flex h-[23px] items-center justify-center" aria-label="Variable table"><svg class="h-4 w-4" viewBox="0 0 16 16" fill="none" stroke="#222" stroke-width="1.400"><path d="M1.500 1.500H8v4H1.500z" fill="#333" stroke-width="1" /><path d="M1.500 3.500H8M3.700 1.500v4M5.900 1.500v4" stroke="#fff" stroke-width=".5" /><path d="M2.500 7q-1.500 3.500.5 7M13 3.500q3 5-.5 10.500M5 7.500q2-1 3 2t3 2.500M11 7q-2 0-3 2.500T5 12.500" /></svg></button>
          </div>

          <svg class="absolute right-[7px] bottom-1 h-4 w-4" viewBox="0 0 16 16" fill="none" stroke="#555" stroke-width="1.100"><path d="M1.500 12.500q0-8 6.500-8t6.500 8zM4.500 12q0-4.500 3.500-4.500t3.500 4.500" /><path d="M6.500 12q0-2 1.500-2t1.500 2" stroke-width=".8" /></svg>
        </main>
      </div>

      <!-- document tabs -->
      <footer class="flex h-[21px] shrink-0 bg-[#d9d9d9]">
        <button class="flex w-[27px] items-center justify-center" aria-label="Insert tab"><svg class="mr-1 h-3 w-3" viewBox="0 0 12 12" stroke="#555" stroke-width="1.800"><path d="M6 1v10M1 6h10" /></svg></button>
        <button class="flex w-[140px] items-center bg-white pl-2 shadow-[inset_0_-2px_0_#4f70b0]"><svg class="mr-0.5 h-[13px] w-[13px]" viewBox="0 0 13 13" fill="none" stroke="#555"><path d="M1 4l2.500-1.500V12L1 11zM3.500 2.500L5.500 4v7.500l-2 .5M5.500 4Q7 1 8.500 3.500V11l-3 .5M8.500 1.500h2l1.500 1v9l-3.500-.5z" /></svg>Part Studio 1</button>
        <button class="ml-0.5 flex w-[140px] items-center bg-[#ececec] pl-[7px] text-[#666]"><svg class="mr-[3px] h-[13px] w-[13px]" viewBox="0 0 13 13" stroke="#777"><path d="M1.500 1.500h8L12 3v9H3.500L1.500 10z" fill="#ddd" /><path d="M4 4h3.500v3.500H4zM7.500 4H11v7H7.500zM4 7.500h3.500V11H4z" fill="#aaa" stroke="#666" /></svg>Assembly 1</button>
      </footer>
    </div>
  </div>
</body>

</html>
